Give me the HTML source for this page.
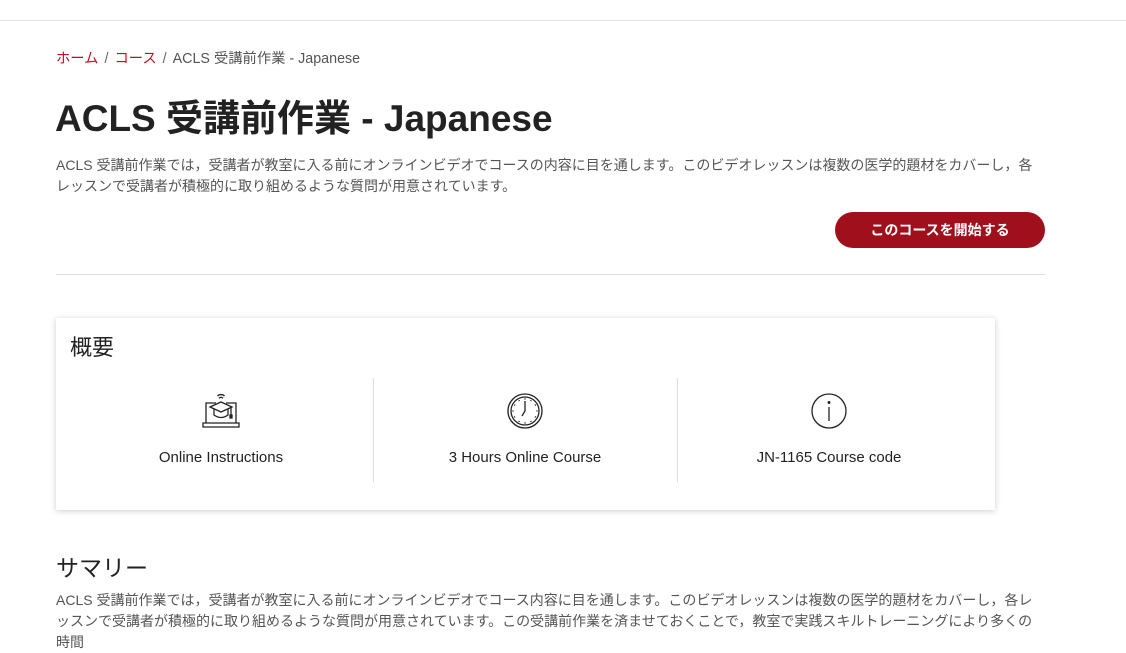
<!DOCTYPE html>
<html><head><meta charset="utf-8"><style>
*{margin:0;padding:0;box-sizing:border-box}
body{width:1126px;height:621px;overflow:hidden;background:#fff;font-family:"Liberation Sans","Noto Sans CJK JP",sans-serif;color:#222;position:relative}
.top{position:absolute;top:20px;left:0;right:0;border-top:1px solid #e3e3e3}
.bc{position:absolute;top:47px;left:56px;font-size:14.3px;color:#555}
.bc a{color:#c10e21;text-decoration:none}
.bc .s{margin:0 6px;color:#666}
h1{position:absolute;top:88px;left:55px;font-size:37px;font-weight:bold;color:#222}
.desc{position:absolute;top:155px;left:56px;width:990px;font-size:14px;line-height:21px;color:#555}
.btn{position:absolute;top:212px;left:835px;width:210px;height:36px;border-radius:18px;background:#a0101c;color:#fff;font-size:14px;font-weight:bold;text-align:center;line-height:36px}
.hr{position:absolute;top:274px;left:56px;width:989px;border-top:1px solid #ddd}
.card{position:absolute;top:318px;left:56px;width:939px;height:192px;background:#fff;box-shadow:0 1px 6px rgba(0,0,0,.2)}
.card h2{position:absolute;top:12px;left:14px;font-size:22px;font-weight:normal;color:#222}
.col{position:absolute;top:60px;height:104px;text-align:center;font-size:15px;color:#222}
.col svg{display:block;margin:14px auto 0}
.col span{position:absolute;left:0;right:0;top:71px}
.div{position:absolute;top:60px;width:1px;height:104px;background:#ddd}
h3{position:absolute;top:549px;left:56px;font-size:23px;font-weight:normal;color:#222}
.sum{position:absolute;top:590px;left:56px;width:990px;font-size:14px;line-height:21px;color:#555}
</style></head><body>
<div class="top"></div>
<div class="bc"><a>ホーム</a><span class="s">/</span><a>コース</a><span class="s">/</span>ACLS 受講前作業 - Japanese</div>
<h1>ACLS 受講前作業 - Japanese</h1>
<div class="desc">ACLS 受講前作業では，受講者が教室に入る前にオンラインビデオでコースの内容に目を通します。このビデオレッスンは複数の医学的題材をカバーし，各レッスンで受講者が積極的に取り組めるような質問が用意されています。</div>
<div class="btn">このコースを開始する</div>
<div class="hr"></div>
<div class="card">
<h2>概要</h2>
<div class="col" style="left:0;width:330px">
<svg width="38" height="38" viewBox="0 0 38 38" fill="none" stroke="#222" stroke-width="1.3"><path d="M15.5 4a5 5 0 0 1 7 0M17 6.3a2.5 2.5 0 0 1 4 0"/><path d="M4 31V11h10M24 11h10v20"/><path d="M1 31h36v4H1z"/><path d="M8 15l11-5 11 5-11 5z"/><path d="M12 17v6q7 5 14 0v-6M29 15v8"/><rect x="28" y="23" width="2" height="3" fill="#222"/></svg>
<span>Online Instructions</span></div>
<div class="div" style="left:317px"></div>
<div class="col" style="left:317px;width:304px">
<svg width="38" height="38" viewBox="0 0 38 38" fill="none" stroke="#222" stroke-width="1.3"><circle cx="19" cy="19" r="17"/><circle cx="19" cy="19" r="14"/><path d="M19 9v10l-3 5"/><g stroke-width="1.6"><path d="M19 6.5v1M19 30.5v1M6.5 19h1M30.5 19h1M12.8 8.3l.5.8M24.7 29l.5.8M8.3 12.8l.8.5M29 24.7l.8.5M25.2 8.3l-.5.8M13.3 29l-.5.8M29.7 12.8l-.8.5M9 24.7l-.8.5"/></g></svg>
<span>3 Hours Online Course</span></div>
<div class="div" style="left:621px"></div>
<div class="col" style="left:621px;width:304px">
<svg width="38" height="38" viewBox="0 0 38 38" fill="none" stroke="#222" stroke-width="1.3"><circle cx="19" cy="19" r="17"/><path d="M19 15v14"/><circle cx="19" cy="10.5" r=".8" fill="#222"/></svg>
<span>JN-1165 Course code</span></div>
</div>
<h3>サマリー</h3>
<div class="sum">ACLS 受講前作業では，受講者が教室に入る前にオンラインビデオでコース内容に目を通します。このビデオレッスンは複数の医学的題材をカバーし，各レッスンで受講者が積極的に取り組めるような質問が用意されています。この受講前作業を済ませておくことで，教室で実践スキルトレーニングにより多くの時間</div>
</body></html>
